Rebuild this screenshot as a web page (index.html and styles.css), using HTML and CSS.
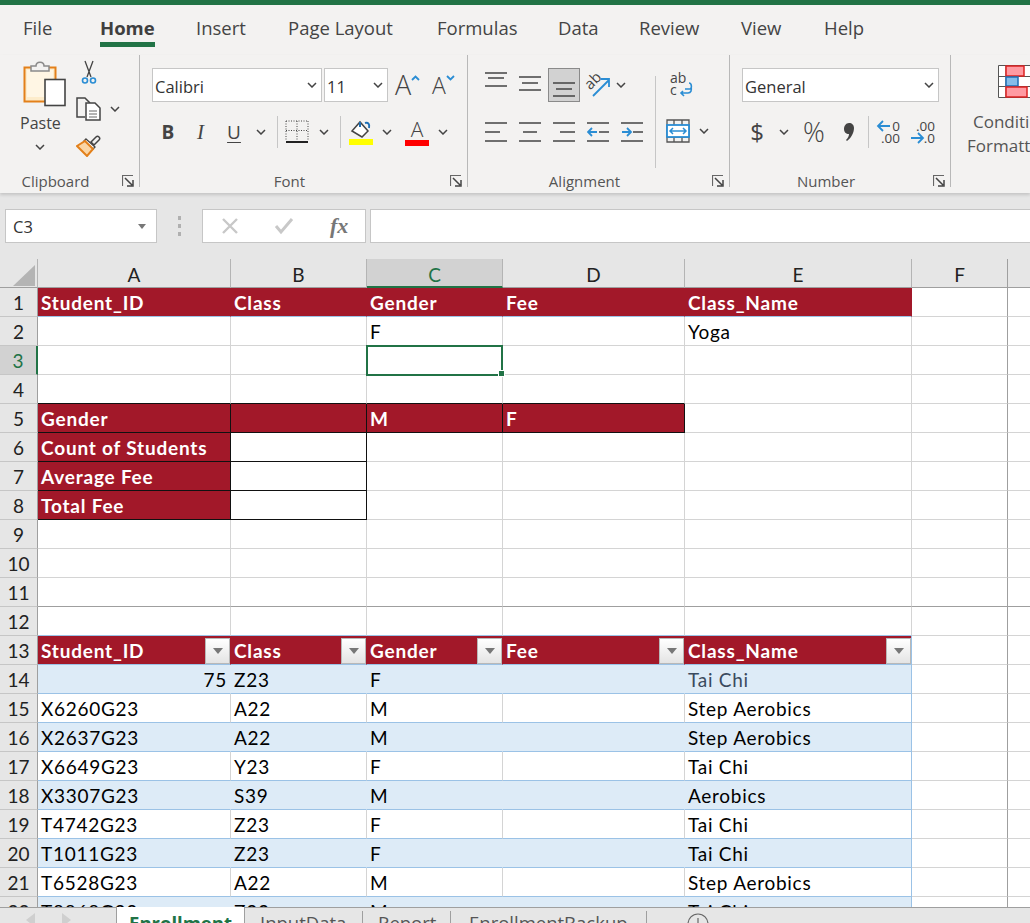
FILE: index.html
```html
<!DOCTYPE html>
<html lang="en">
<head>
<meta charset="utf-8">
<title>Enrollment</title>
<link rel="stylesheet" href="styles.css">
</head>
<body>
<svg class="defs" width="0" height="0" aria-hidden="true">
  <symbol id="chev" viewBox="0 0 10 6"><path d="M1 1l4 4 4-4" fill="none" stroke="#444" stroke-width="1.5"/></symbol>
  <symbol id="launch" viewBox="0 0 12 12"><path d="M.5 11V.5H11" fill="none" stroke="#666" stroke-width="1.2"/><path d="M3 3l7 7M5 11h6V5" fill="none" stroke="#444" stroke-width="1.5"/></symbol>
</svg>
<div class="app">
  <div class="topbar"></div>
  <nav class="tabs">
    <span>File</span><span class="on">Home</span><span>Insert</span><span>Page Layout</span><span>Formulas</span><span>Data</span><span>Review</span><span>View</span><span>Help</span>
  </nav>
  <div class="ribbon">
    <section class="group g-clip">
      <div class="clip-body">
        <div class="paste">
          <svg class="ic-paste" width="44" height="47" viewBox="0 0 44 47">
            <rect x="1.5" y="7.5" width="31" height="34" fill="#fdeccb" stroke="#e3801a" stroke-width="2"/>
            <path d="M4 10h26v27H4z" fill="#fff6e4"/>
            <path d="M8 11V6h5c0-5 8-5 8 0h5v5z" fill="#f3f2f1" stroke="#8a8a8a" stroke-width="1.5"/>
            <rect x="22" y="19.5" width="20" height="26" fill="#fff" stroke="#444" stroke-width="1.6"/>
          </svg>
          <span class="paste-label">Paste</span>
          <svg class="chev" width="10" height="6"><use href="#chev"/></svg>
        </div>
        <div class="clip-tools">
          <svg width="18" height="25" viewBox="0 0 18 25">
            <path d="M5 1l6 16M13 1L7 17" stroke="#444" stroke-width="1.3" fill="none"/>
            <circle cx="5" cy="20.500" r="2.500" fill="none" stroke="#2a8dd4" stroke-width="1.600"/>
            <circle cx="13" cy="20.500" r="2.500" fill="none" stroke="#2a8dd4" stroke-width="1.600"/>
          </svg>
          <div class="copy-line">
            <svg width="25" height="24" viewBox="0 0 25 24">
              <path d="M9 20H1V1h8l5 5" fill="none" stroke="#444" stroke-width="1.500"/>
              <path d="M10 6h9l5 5v12H10z" fill="#fff" stroke="#444" stroke-width="1.500"/>
              <path d="M13 14h8M13 17h8M13 20h8" stroke="#666"/>
            </svg>
            <svg class="chev" width="10" height="6"><use href="#chev"/></svg>
          </div>
          <svg class="painter" width="25" height="23" viewBox="0 0 25 23">
            <path d="M15 8l5-5a2 2 0 0 1 3 3l-5 5z" fill="#f3f2f1" stroke="#444" stroke-width="1.500"/>
            <path d="M10 5l9 8-2 2-9-8z" fill="#fff" stroke="#444" stroke-width="1.300"/>
            <path d="M1 12l8-5 8 8-6 7z" fill="#fbd6a5" stroke="#e3801a" stroke-width="2"/>
          </svg>
        </div>
      </div>
      <footer class="glabel"><span>Clipboard</span><svg class="launcher" width="12" height="12"><use href="#launch"/></svg></footer>
    </section>

    <section class="group g-font">
      <div class="font-row1">
        <div class="combo c-font"><span>Calibri</span><svg width="10" height="6"><use href="#chev"/></svg></div>
        <div class="combo c-size"><span>11</span><svg width="10" height="6"><use href="#chev"/></svg></div>
        <div class="grow big">A<svg width="9" height="6" viewBox="0 0 9 6"><path d="M1 5l3.500-3.500L8 5" fill="none" stroke="#2a8dd4" stroke-width="1.800"/></svg></div>
        <div class="grow small">A<svg width="9" height="6" viewBox="0 0 9 6"><path d="M1 1l3.500 3.500L8 1" fill="none" stroke="#2a8dd4" stroke-width="1.800"/></svg></div>
      </div>
      <div class="font-row2">
        <b class="fmt fmt-b">B</b>
        <i class="fmt fmt-i">I</i>
        <span class="fmt fmt-u">U</span>
        <svg width="10" height="6"><use href="#chev"/></svg>
        <span class="vsep"></span>
        <svg width="24" height="24" viewBox="0 0 24 24">
          <path d="M1 1h22M1 1v19M23 1v19M12 1v19M1 10.500h22" stroke="#444" stroke-dasharray="1 1.500" fill="none"/>
          <path d="M1 22h22" stroke="#222" stroke-width="2"/>
        </svg>
        <svg width="10" height="6"><use href="#chev"/></svg>
        <span class="vsep"></span>
        <svg width="24" height="25" viewBox="0 0 24 25">
          <path d="M3 11l8-9 8 9-6 6z" fill="#fff" stroke="#444" stroke-width="1.500"/>
          <path d="M11 2v5M20 8c1-4-1-6-4-5" fill="none" stroke="#1f6fb5" stroke-width="2"/>
          <rect y="19" width="24" height="6" fill="#ffff00"/>
        </svg>
        <svg width="10" height="6"><use href="#chev"/></svg>
        <span class="color-a">A</span>
        <svg width="10" height="6"><use href="#chev"/></svg>
      </div>
      <footer class="glabel"><span>Font</span><svg class="launcher" width="12" height="12"><use href="#launch"/></svg></footer>
    </section>

    <section class="group g-align">
      <div class="align-main">
        <div class="align-grid">
          <svg width="22" height="34" viewBox="0 0 22 34"><path d="M0 5h22M3 10h16M0 18h22" stroke="#444" stroke-width="1.500"/></svg>
          <svg width="22" height="34" viewBox="0 0 22 34"><path d="M0 9h22M3 15h16M0 22h22" stroke="#444" stroke-width="1.500"/></svg>
          <div class="al-on"><svg width="22" height="32" viewBox="0 0 22 32"><path d="M0 14h22M3 20h16M0 27h22" stroke="#444" stroke-width="1.500"/></svg></div>
          <div class="orient">
            <svg width="26" height="26" viewBox="0 0 26 26">
              <text x="0" y="14" class="orient-t" transform="rotate(-45 8 10)">ab</text>
              <path d="M8 24L24 8M16 7h8v8" fill="none" stroke="#2a8dd4" stroke-width="1.800"/>
            </svg>
            <svg width="10" height="6"><use href="#chev"/></svg>
          </div>
          <svg width="22" height="22" viewBox="0 0 22 22"><path d="M0 2h22M0 11h15M0 20h22" stroke="#444" stroke-width="1.500"/></svg>
          <svg width="22" height="22" viewBox="0 0 22 22"><path d="M0 2h22M4 11h14M0 20h22" stroke="#444" stroke-width="1.500"/></svg>
          <svg width="22" height="22" viewBox="0 0 22 22"><path d="M0 2h22M7 11h15M0 20h22" stroke="#444" stroke-width="1.500"/></svg>
          <svg width="22" height="22" viewBox="0 0 22 22"><path d="M0 2h22M12 11h10M0 20h22" stroke="#444" stroke-width="1.500"/><path d="M1 11h9M5 7l-4 4 4 4" fill="none" stroke="#2a8dd4" stroke-width="1.800"/></svg>
          <svg width="22" height="22" viewBox="0 0 22 22"><path d="M0 2h22M12 11h10M0 20h22" stroke="#444" stroke-width="1.500"/><path d="M1 11h9M6 7l4 4-4 4" fill="none" stroke="#2a8dd4" stroke-width="1.800"/></svg>
        </div>
        <span class="vsep tall"></span>
        <div class="wrapcol">
          <svg width="24" height="26" viewBox="0 0 24 26">
            <text x="1" y="11" class="wrap-t">ab</text><text x="1" y="23" class="wrap-t">c</text>
            <path d="M16 17h5c2 0 2-6-1-6M14 19l-2 2 3 3M12 21h7c3 0 4-3 3-6" fill="none" stroke="#2a8dd4" stroke-width="1.600"/>
          </svg>
          <div class="merge-line">
            <svg width="24" height="24" viewBox="0 0 24 24">
              <path d="M1 1h22v22H1zM1 7h22M1 18h22M8 1v6M16 1v6M8 18v5M16 18v5" fill="none" stroke="#555" stroke-width="1.300"/>
              <rect x="1" y="6" width="22" height="12" fill="#fff" stroke="#2a8dd4" stroke-width="1.800"/>
              <path d="M4 12h16M7 9l-3 3 3 3M17 9l3 3-3 3" fill="none" stroke="#2a8dd4" stroke-width="1.500"/>
            </svg>
            <svg width="10" height="6"><use href="#chev"/></svg>
          </div>
        </div>
      </div>
      <footer class="glabel"><span>Alignment</span><svg class="launcher" width="12" height="12"><use href="#launch"/></svg></footer>
    </section>

    <section class="group g-num">
      <div class="combo c-num"><span>General</span><svg width="10" height="6"><use href="#chev"/></svg></div>
      <div class="num-row2">
        <span class="nsym">$</span>
        <svg width="10" height="6"><use href="#chev"/></svg>
        <span class="nsym pct">%</span>
        <svg width="12" height="20" viewBox="0 0 12 20"><path d="M6 1c3 0 5 2 5 5 0 5-3 10-7 13l-1-1c2-2 3-4 3-6-3 0-5-2-5-5s2-6 5-6z" fill="#444"/></svg>
        <span class="vsep"></span>
        <div class="dec"><svg width="14" height="12" viewBox="0 0 14 12"><path d="M2 6h12M7 1L2 6l5 5" fill="none" stroke="#2a8dd4" stroke-width="1.800"/></svg><span class="d1">0</span><span class="d2">.00</span></div>
        <div class="dec"><span class="d3">.00</span><svg width="14" height="12" viewBox="0 0 14 12"><path d="M0 6h12M7 1l5 5-5 5" fill="none" stroke="#2a8dd4" stroke-width="1.800"/></svg><span class="d4">.0</span></div>
      </div>
      <footer class="glabel"><span>Number</span><svg class="launcher" width="12" height="12"><use href="#launch"/></svg></footer>
    </section>

    <section class="group g-style">
      <svg class="cf" width="40" height="33" viewBox="0 0 40 33">
        <path d="M.5.500h39v32H.5zM.5 11.500h39M.5 21.500h39M8 0v33" fill="#fff" stroke="#555"/>
        <rect x="8" y="1" width="18" height="10" fill="#ff9aa2" stroke="#d22" stroke-width="1.500"/>
        <rect x="8" y="12" width="12" height="9" fill="#85bdea" stroke="#1f6fb5" stroke-width="1.500"/>
        <rect x="8" y="22" width="21" height="10" fill="#ff9aa2" stroke="#d22" stroke-width="1.500"/>
      </svg>
      <div class="cf-label"><span class="cf-1">Conditional</span><span>Formatting</span></div>
    </section>
  </div>

  <div class="formula">
    <div class="namebox"><span>C3</span><svg width="8" height="5" viewBox="0 0 8 5"><path d="M0 0h8L4 5z" fill="#777"/></svg></div>
    <div class="dots"><i></i><i></i><i></i></div>
    <div class="fxbox">
      <svg width="18" height="18" viewBox="0 0 18 18"><path d="M2 2l14 14M16 2L2 16" stroke="#c8c8c8" stroke-width="2.400"/></svg>
      <svg width="20" height="18" viewBox="0 0 20 18"><path d="M2 9l5 6L18 2" fill="none" stroke="#c8c8c8" stroke-width="3"/></svg>
      <span class="fx">fx</span>
    </div>
    <div class="fbar"></div>
  </div>

  <div class="sheet">
    <div class="row colhead"><div class="corner"><svg width="22" height="21" viewBox="0 0 22 21"><path d="M22 0v21H0z" fill="#b4b4b4"/></svg></div><div>A</div><div>B</div><div class="sel-col">C</div><div>D</div><div>E</div><div>F</div><div></div></div>
    <div class="row"><div class="rh">1</div><div class="c h">Student_ID</div><div class="c h">Class</div><div class="c h">Gender</div><div class="c h">Fee</div><div class="c h">Class_Name</div><div class="c"></div><div class="c"></div></div>
    <div class="row"><div class="rh">2</div><div class="c"></div><div class="c"></div><div class="c">F</div><div class="c"></div><div class="c">Yoga</div><div class="c"></div><div class="c"></div></div>
    <div class="row"><div class="rh sel-row">3</div><div class="c"></div><div class="c"></div><div class="c sel"></div><div class="c"></div><div class="c"></div><div class="c"></div><div class="c"></div></div>
    <div class="row"><div class="rh">4</div><div class="c kb"></div><div class="c kb"></div><div class="c kb"></div><div class="c kb"></div><div class="c"></div><div class="c"></div><div class="c"></div></div>
    <div class="row"><div class="rh">5</div><div class="c h k">Gender</div><div class="c h k"></div><div class="c h k">M</div><div class="c h k">F</div><div class="c"></div><div class="c"></div><div class="c"></div></div>
    <div class="row"><div class="rh">6</div><div class="c h k">Count of Students</div><div class="c k"></div><div class="c"></div><div class="c"></div><div class="c"></div><div class="c"></div><div class="c"></div></div>
    <div class="row"><div class="rh">7</div><div class="c h k">Average Fee</div><div class="c k"></div><div class="c"></div><div class="c"></div><div class="c"></div><div class="c"></div><div class="c"></div></div>
    <div class="row"><div class="rh">8</div><div class="c h k">Total Fee</div><div class="c k"></div><div class="c"></div><div class="c"></div><div class="c"></div><div class="c"></div><div class="c"></div></div>
    <div class="row"><div class="rh">9</div><div class="c"></div><div class="c"></div><div class="c"></div><div class="c"></div><div class="c"></div><div class="c"></div><div class="c"></div></div>
    <div class="row"><div class="rh">10</div><div class="c"></div><div class="c"></div><div class="c"></div><div class="c"></div><div class="c"></div><div class="c"></div><div class="c"></div></div>
    <div class="row freeze"><div class="rh">11</div><div class="c"></div><div class="c"></div><div class="c"></div><div class="c"></div><div class="c"></div><div class="c"></div><div class="c"></div></div>
    <div class="row"><div class="rh">12</div><div class="c bb"></div><div class="c bb"></div><div class="c bb"></div><div class="c bb"></div><div class="c bb"></div><div class="c"></div><div class="c"></div></div>
    <div class="row table"><div class="rh">13</div>
      <div class="c h f"><span>Student_ID</span><button class="fbtn" type="button"></button></div>
      <div class="c h f"><span>Class</span><button class="fbtn" type="button"></button></div>
      <div class="c h f"><span>Gender</span><button class="fbtn" type="button"></button></div>
      <div class="c h f"><span>Fee</span><button class="fbtn" type="button"></button></div>
      <div class="c h f"><span>Class_Name</span><button class="fbtn" type="button"></button></div>
      <div class="c"></div><div class="c"></div></div>
    <div class="row table band"><div class="rh">14</div><div class="c d n">75</div><div class="c d">Z23</div><div class="c d">F</div><div class="c d"></div><div class="c d soft">Tai Chi</div><div class="c"></div><div class="c"></div></div>
    <div class="row table"><div class="rh">15</div><div class="c d">X6260G23</div><div class="c d">A22</div><div class="c d">M</div><div class="c d"></div><div class="c d">Step Aerobics</div><div class="c"></div><div class="c"></div></div>
    <div class="row table band"><div class="rh">16</div><div class="c d">X2637G23</div><div class="c d">A22</div><div class="c d">M</div><div class="c d"></div><div class="c d">Step Aerobics</div><div class="c"></div><div class="c"></div></div>
    <div class="row table"><div class="rh">17</div><div class="c d">X6649G23</div><div class="c d">Y23</div><div class="c d">F</div><div class="c d"></div><div class="c d">Tai Chi</div><div class="c"></div><div class="c"></div></div>
    <div class="row table band"><div class="rh">18</div><div class="c d">X3307G23</div><div class="c d">S39</div><div class="c d">M</div><div class="c d"></div><div class="c d">Aerobics</div><div class="c"></div><div class="c"></div></div>
    <div class="row table"><div class="rh">19</div><div class="c d">T4742G23</div><div class="c d">Z23</div><div class="c d">F</div><div class="c d"></div><div class="c d">Tai Chi</div><div class="c"></div><div class="c"></div></div>
    <div class="row table band"><div class="rh">20</div><div class="c d">T1011G23</div><div class="c d">Z23</div><div class="c d">F</div><div class="c d"></div><div class="c d">Tai Chi</div><div class="c"></div><div class="c"></div></div>
    <div class="row table"><div class="rh">21</div><div class="c d">T6528G23</div><div class="c d">A22</div><div class="c d">M</div><div class="c d"></div><div class="c d">Step Aerobics</div><div class="c"></div><div class="c"></div></div>
    <div class="row table band"><div class="rh">22</div><div class="c d">T8868G23</div><div class="c d">Z23</div><div class="c d">M</div><div class="c d"></div><div class="c d">Tai Chi</div><div class="c"></div><div class="c"></div></div>
  </div>

  <div class="sheettabs">
    <div class="navs"><svg width="10" height="14" viewBox="0 0 10 14"><path d="M9 0L0 7l9 7z" fill="#cfcfcf"/></svg><svg width="10" height="14" viewBox="0 0 10 14"><path d="M0 0l9 7-9 7z" fill="#cfcfcf"/></svg></div>
    <div class="stab active">Enrollment</div>
    <div class="stab t2">InputData</div>
    <div class="stab t3">Report</div>
    <div class="stab t4">EnrollmentBackup</div>
    <svg class="plus" width="22" height="22" viewBox="0 0 22 22"><circle cx="11" cy="11" r="10" fill="none" stroke="#666" stroke-width="1.200"/><path d="M11 5v12M5 11h12" stroke="#666" stroke-width="1.200"/></svg>
  </div>
</div>
</body>
</html>
```
FILE: styles.css
```css
* { box-sizing: border-box; }
html, body { margin: 0; padding: 0; background: #e6e6e6; }
.defs { position: absolute; }
.app {
  width: 1030px; height: 923px; overflow: hidden;
  display: flex; flex-direction: column;
  font-family: "Open Sans", "Noto Sans", sans-serif; color: #444;
}
.topbar { height: 5px; flex: none; background: #217346; }

/* ribbon tabs */
.tabs {
  flex: none; height: 50px; background: #f3f2f1;
  display: grid; grid-template-columns: 77px 96px 92px 149px 121px 81px 102px 83px 60px;
  padding-left: 23px; font-size: 18.5px; line-height: 46px;
}
.tabs span { white-space: nowrap; }
.tabs .on { font-weight: 700; position: relative; color: #3f3f3f; width: 55px; }
.tabs .on::after { content: ""; position: absolute; left: 0; right: 0; top: 37px; height: 5px; background: #217346; }

/* ribbon */
.ribbon {
  flex: none; height: 138px; background: #f3f2f1; display: flex; overflow: hidden;
  box-shadow: 0 2px 3px rgba(0,0,0,.15); position: relative; z-index: 1;
}
.group { flex: none; height: 132px; border-right: 1px solid #b8b8b8; position: relative; padding-top: 13px; }
.g-clip { width: 140px; }
.g-font { width: 328px; padding-left: 12px; }
.g-align { width: 262px; }
.g-num { width: 221px; padding-left: 12px; padding-top: 13px; }
.g-style { width: 79px; border-right: 0; overflow: hidden; }
.glabel {
  position: absolute; left: 0; right: 0; top: 115px; height: 22px; padding-right: 28px;
  text-align: center; font-size: 15px; line-height: 22px; color: #555;
}
.launcher { position: absolute; right: 5px; top: 5px; }

/* clipboard */
.clip-body { display: flex; padding-left: 20px; }
.paste { width: 56px; display: flex; flex-direction: column; align-items: flex-start; margin-top: -8px; }
.ic-paste { margin-left: 3px; }
.paste-label { font-size: 16px; line-height: 22px; margin-top: 5px; width: 41px; }
.paste .chev { margin: 10px 0 0 15px; }
.clip-tools { display: flex; flex-direction: column; align-items: flex-start; margin-top: -8px; }
.clip-tools > svg:first-child { margin-left: 4px; }
.copy-line { display: flex; align-items: center; gap: 9px; margin-top: 12px; }
.painter { margin-top: 13px; }

/* font */
.font-row1 { display: flex; align-items: center; height: 34px; }
.combo {
  height: 34px; background: #fff; border: 1px solid #c6c6c6;
  display: flex; align-items: center; justify-content: space-between;
  padding: 0 4px 0 2px; font-size: 16.500px; color: #333;
}
.combo span { padding-top: 2px; }
.c-font { width: 170px; }
.c-size { width: 64px; margin-left: 2px; }
.c-num { width: 197px; }
.grow { display: flex; align-items: flex-start; color: #444; line-height: 34px; font-weight: 300; }
.grow svg { margin-top: 7px; }
.big { font-size: 27px; margin-left: 7px; width: 37px; }
.small { font-size: 23px; width: 30px; }
.font-row2 {
  display: grid; align-items: center; justify-items: center; height: 34px; margin-top: 13px;
  grid-template-columns: 32px 33px 34px 20px 12px 28px 26px 6px 36px 16px 44px 8px;
}
.fmt { font-size: 19px; line-height: 24px; }
.fmt-b { font-weight: 700; }
.fmt-i { font-family: "Liberation Serif", serif; font-size: 21px; }
.fmt-u { text-decoration: underline; text-underline-offset: 3px; }
.vsep { width: 1px; height: 32px; background: #c6c6c6; display: block; }
.vsep.tall { height: 92px; }
.color-a {
  font-size: 21px; line-height: 21px; width: 24px; text-align: center; font-weight: 300;
  border-bottom: 6px solid #f00; height: 27px; display: block;
}

/* alignment */
.align-main { display: flex; padding-left: 11px; }
.align-grid {
  display: grid; align-items: center; justify-items: center; width: 176px;
  grid-template-columns: repeat(5, 34px); grid-template-rows: 34px 34px; row-gap: 13px;
}
.al-on { width: 32px; height: 34px; background: #d2d2d2; border: 1px solid #8a8a8a; display: flex; justify-content: center; }
.orient { display: flex; align-items: center; gap: 5px; grid-column: span 2; justify-self: start; margin-left: 4px; }
.orient-t { font: 15px "Open Sans", sans-serif; fill: #444; }
.align-main > .vsep { margin: 8px 0 0 0; }
.wrapcol { display: flex; flex-direction: column; margin-left: 13px; padding-top: 4px; }
.wrap-t { font: 14px "Open Sans", sans-serif; fill: #444; }
.merge-line { display: flex; align-items: center; gap: 9px; margin-top: 21px; margin-left: -3px; }

/* number */
.num-row2 {
  display: grid; align-items: center; justify-items: center; height: 34px; margin-top: 13px;
  grid-template-columns: 30px 24px 36px 34px 4px 36px 34px;
}
.nsym { font-size: 24px; line-height: 30px; }
.pct { font-size: 27px; font-weight: 300; }
.dec { position: relative; width: 24px; height: 24px; font-size: 13.500px; line-height: 12px; color: #444; }
.dec span, .dec svg { position: absolute; }
.dec svg { left: 0; top: 0; }
.d1 { right: 0; top: 0; }
.d2 { right: 0; top: 12px; }
.d3 { right: 0; top: 0; }
.d4 { right: 0; top: 12px; }
.dec svg:nth-child(2) { top: 12px; }

/* conditional format */
.cf { display: block; margin: -3px 0 0 47px; }
.cf-label { font-size: 17px; line-height: 24px; color: #555; white-space: nowrap; margin: 12px 0 0 16px; }
.cf-label span { display: block; }
.cf-1 { margin-left: 6px; }

/* formula bar */
.formula {
  flex: none; height: 66px; background: #e6e6e6; display: flex; padding: 16px 0 0 5px; align-items: flex-start;
}
.namebox {
  width: 152px; height: 34px; background: #fff; border: 1px solid #c6c6c6;
  display: flex; align-items: center; justify-content: space-between;
  padding: 0 10px 0 7px; font-size: 16.500px; color: #333;
}
.dots { width: 45px; height: 34px; display: flex; flex-direction: column; align-items: center; justify-content: center; gap: 4px; }
.dots i { width: 3px; height: 4px; background: #b0b0b0; display: block; }
.fxbox {
  width: 164px; height: 34px; background: #fff; border: 1px solid #c6c6c6;
  display: flex; align-items: center; gap: 35px; padding-left: 18px;
}
.fx { font: italic 700 22px "Liberation Serif", serif; color: #777; margin-left: 1px; }
.fbar { flex: 1; height: 34px; margin-left: 4px; background: #fff; border: 1px solid #c6c6c6; border-right: 0; }

/* sheet */
.sheet { flex: 1; min-height: 0; overflow: hidden; background: #fff; font-family: "Lato", "Open Sans", sans-serif; font-size: 19px; color: #000; }
.row {
  display: grid; height: 29px;
  grid-template-columns: 38px 193px 136px 136px 182px 227px 96px 22px;
}
.row > div { border-right: 1px solid #d4d4d4; border-bottom: 1px solid #d4d4d4; white-space: nowrap; line-height: 30px; min-width: 0; overflow: hidden; }
.row > div:nth-child(7) { border-right-color: #9f9f9f; }
.row > div:last-child { border-right: 0; }
.colhead > div {
  background: #e6e6e6; text-align: center; border-right-color: #b4b4b4; border-bottom-color: #9f9f9f;
  color: #222; line-height: 32px;
}
.colhead > div:nth-child(7) { border-right-color: #9f9f9f; }
.corner { display: flex; justify-content: flex-end; align-items: flex-end; padding: 0 2px 1px 0; }
.colhead .sel-col { background: #d2d2d2; color: #217346; border-bottom: 2px solid #217346; }
.row > .rh {
  background: #e6e6e6; text-align: center; border-right-color: #9f9f9f; border-bottom-color: #c6c6c6; color: #222;
  padding-left: 0; line-height: 30px;
}
.row > .sel-row { background: #d2d2d2; color: #217346; border-right: 2px solid #217346; }
.c { padding-left: 3px; background: #fff; letter-spacing: .72px; }
.row > .h { background: #a21829; color: #fff; font-weight: 700; letter-spacing: .8px; border-right-color: #a21829; border-bottom-color: #9bc2e6; }
.row > .k { border-right-color: #111; border-bottom-color: #111; }
.row > .kb { border-bottom-color: #111; }
.row > .bb { border-bottom-color: #9bc2e6; }
.row > .sel { position: relative; overflow: visible; }
.sel::before { content: ""; position: absolute; left: -1px; top: -1px; width: 133px; height: 27px; border: 2px solid #217346; z-index: 2; }
.sel::after { content: ""; position: absolute; right: -3px; bottom: -3px; width: 5px; height: 5px; background: #217346; border: 1px solid #fff; z-index: 3; }
.row.freeze > div:not(.rh) { border-bottom-color: #9f9f9f; }
.row.table > .h, .row.table > .d { border-bottom-color: #9bc2e6; }
.row.table > div:nth-child(6) { border-right-color: #9bc2e6; }
.f { display: flex; align-items: center; justify-content: space-between; }
.f span { margin-top: 1px; }
.fbtn {
  width: 25px; height: 26px; padding: 0; border: 1px solid #b8b8b8; flex: none;
  background: linear-gradient(#fff, #e4e4e4); position: relative; margin-top: 2px;
}
.fbtn::after { content: ""; position: absolute; left: 7px; top: 9px; border: 5px solid transparent; border-top: 6px solid #777; border-bottom: 0; }
.band > .d { background: #ddebf7; border-right-color: #ddebf7; }
.row > .n { text-align: right; padding-right: 3px; }
.soft { color: #3a4a5e; }

/* sheet tabs */
.sheettabs {
  flex: none; height: 16px; background: #e6e6e6; border-top: 1px solid #9f9f9f; display: flex; align-items: flex-start; overflow: visible;
  font-size: 18.5px; line-height: 24px; color: #555; position: relative;
}
.navs { width: 116px; display: flex; gap: 26px; padding: 5px 0 0 26px; }
.stab { height: 30px; padding: 0 12px; border-right: 1px solid #9f9f9f; margin-top: 3px; white-space: nowrap; }
.stab.active { background: #fff; color: #217346; font-weight: 700; margin-top: -1px; padding: 4px 0 0; width: 129px; border-left: 1px solid #9f9f9f; text-align: center; }
.t2 { width: 118px; padding-left: 15px; }
.t3 { width: 88px; padding-left: 15px; }
.t4 { width: 196px; padding-left: 18px; }
.plus { margin: 5px 0 0 40px; flex: none; }
```
